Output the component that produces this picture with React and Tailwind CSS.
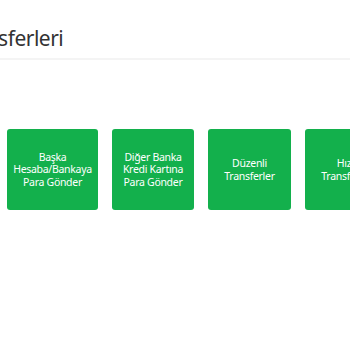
export default function App() {
    const cards = [
        { lines: ["Başka", "Hesaba/Bankaya", "Para Gönder"], w: "w-[91px]" },
        { lines: ["Diğer Banka", "Kredi Kartına", "Para Gönder"], w: "w-[82px]" },
        { lines: ["Düzenli", "Transferler"], w: "w-[83px]" },
        { lines: ["Hızlı", "Transferler"], w: "w-[83px]" },
    ];

    return (
        <div
            className="w-[350px] h-[350px] overflow-hidden bg-white"
            style={{ fontFamily: "'Noto Sans', 'Open Sans', sans-serif" }}
        >
            <div className="pt-[8px] whitespace-nowrap">
                <div className="-ml-[57px] text-[11px] leading-[14px] text-[#555]">
                    Anasayfa /
                </div>
                <h1 className="-ml-[91px] text-[21px] leading-[28px] tracking-[-0.5px] text-[#333] font-normal mt-[2px]">
                    Para Transferleri
                </h1>
            </div>
            <div className="mt-[6px] h-[2px] bg-[#f4f4f4]" />
            <div className="flex gap-[14px] pl-[7px] mt-[69px]">
                {cards.map((card, i) => (
                    <div
                        key={i}
                        className={`${card.w} h-[81px] shrink-0 rounded-[3px] bg-[#13b04c] flex flex-col items-center justify-center text-center text-white text-[10.5px] leading-[12.5px] tracking-[-0.3px]`}
                    >
                        {card.lines.map((line, j) => (
                            <span key={j} className="whitespace-nowrap">{line}</span>
                        ))}
                    </div>
                ))}
            </div>
        </div>
    );
}
